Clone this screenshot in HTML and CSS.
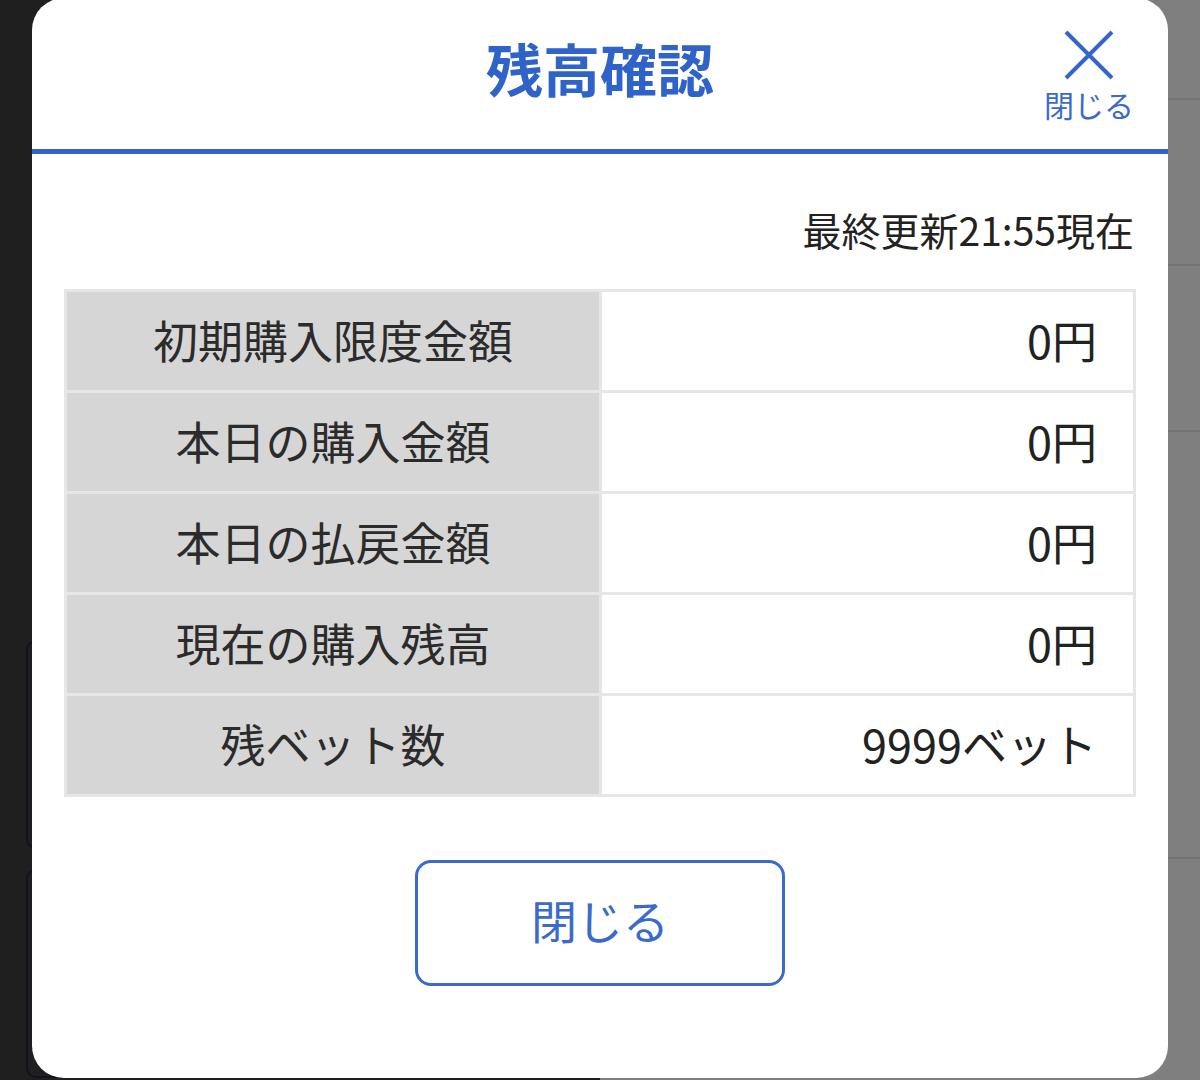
FILE: index.html
```html
<!DOCTYPE html>
<html lang="ja">
<head>
  <meta charset="UTF-8">
  <meta name="viewport" content="width=device-width, initial-scale=1.0">
  <title>残高確認</title>
  <link rel="stylesheet" href="styles.css">
</head>
<body>

  <!-- 背景のページ -->
  <div class="backdrop">
    <div class="bg-left">
      <div class="bg-card"></div>
      <div class="bg-card"></div>
    </div>
    <div class="bg-right">
      <div class="bg-row short"></div>
      <div class="bg-row"></div>
      <div class="bg-row"></div>
      <div class="bg-row tall"></div>
    </div>
  </div>

  <div class="modal">
    <div class="modal-header">
      <span></span>
      <h2 class="modal-title">残高確認</h2>
      <button class="close-top" onclick="closeModal()">
        <svg width="50" height="50" viewBox="0 0 50 50">
          <path d="M2 2 L48 48 M48 2 L2 48" stroke="#3565cb" stroke-width="4" fill="none"/>
        </svg>
        <span>閉じる</span>
      </button>
    </div>

    <p class="updated">最終更新21:55現在</p>

    <table class="balance">
      <tbody>
        <tr><th>初期購入限度金額</th><td>0円</td></tr>
        <tr><th>本日の購入金額</th><td>0円</td></tr>
        <tr><th>本日の払戻金額</th><td>0円</td></tr>
        <tr><th>現在の購入残高</th><td>0円</td></tr>
        <tr><th>残ベット数</th><td>9999ベット</td></tr>
      </tbody>
    </table>

    <div class="footer">
      <button class="close-btn" onclick="closeModal()">閉じる</button>
    </div>
  </div>

  <script>
    function closeModal() {
      document.querySelector('.modal').style.display = 'none';
    }
  </script>

</body>
</html>
```

FILE: styles.css
```css
body {
  margin: 0;
  height: 1080px;
  overflow: hidden;
  font-family: "Noto Sans CJK JP", "Noto Sans", sans-serif;
  background-color: #1f1f1f;
}

.backdrop {
  display: flex;
  height: 1080px;
}

.bg-left {
  flex: 1;
  background-color: #1f1f1f;
  padding-top: 640px;
}

.bg-card {
  height: 205px;
  margin: 0 0 20px 26px;
  border: 2px solid #0f1322;
  border-right: none;
  border-radius: 10px 0 0 10px;
}

.bg-right {
  flex: 1;
  background-color: #7f7f7f;
}

.bg-row {
  height: 164px;
  border-bottom: 2px solid #737373;
}

.bg-row.short {
  height: 98px;
}

.bg-row.tall {
  height: 425px;
}

.modal {
  position: absolute;
  top: -2px;
  left: 32px;
  width: 1136px;
  height: 1080px;
  background-color: #fff;
  border-radius: 32px;
}

.modal-header {
  display: grid;
  grid-template-columns: 1fr auto 1fr;
  align-items: center;
  height: 156px;
  box-sizing: border-box;
  border-bottom: 5px solid #3163c9;
}

.modal-title {
  margin: 0 0 12px;
  font-size: 57px;
  font-weight: bold;
  line-height: 1;
  color: #2f63c9;
}

.close-top {
  justify-self: end;
  margin-right: 34px;
  margin-top: 4px;
  padding: 0;
  border: none;
  background: none;
  display: flex;
  flex-direction: column;
  align-items: center;
  gap: 8px;
  color: #3a6acb;
  font-family: inherit;
  font-size: 30px;
  line-height: 1.1;
  cursor: pointer;
}

.updated {
  margin: 52px 34px 0 0;
  text-align: right;
  font-size: 39px;
  line-height: 1.2;
  color: #222;
}

.balance {
  width: 1072px;
  margin: 36px auto 0;
  border-collapse: collapse;
  table-layout: fixed;
}

.balance th, .balance td {
  height: 95px;
  border: 3px solid #e6e6e6;
  font-size: 45px;
  font-weight: normal;
  color: #2b2b2b;
  padding: 0 0 3px;
}

.balance th {
  width: 532px;
  background-color: #d6d6d6;
  text-align: center;
}

.balance td {
  text-align: right;
  padding-right: 36px;
  color: #222;
}

.footer {
  display: flex;
  justify-content: center;
  margin-top: 63px;
}

.close-btn {
  width: 370px;
  height: 126px;
  padding: 0 0 7px;
  border: 3px solid #3a6acb;
  border-radius: 16px;
  background-color: #fff;
  color: #3a6acb;
  font-family: inherit;
  font-size: 46px;
  cursor: pointer;
}
```
